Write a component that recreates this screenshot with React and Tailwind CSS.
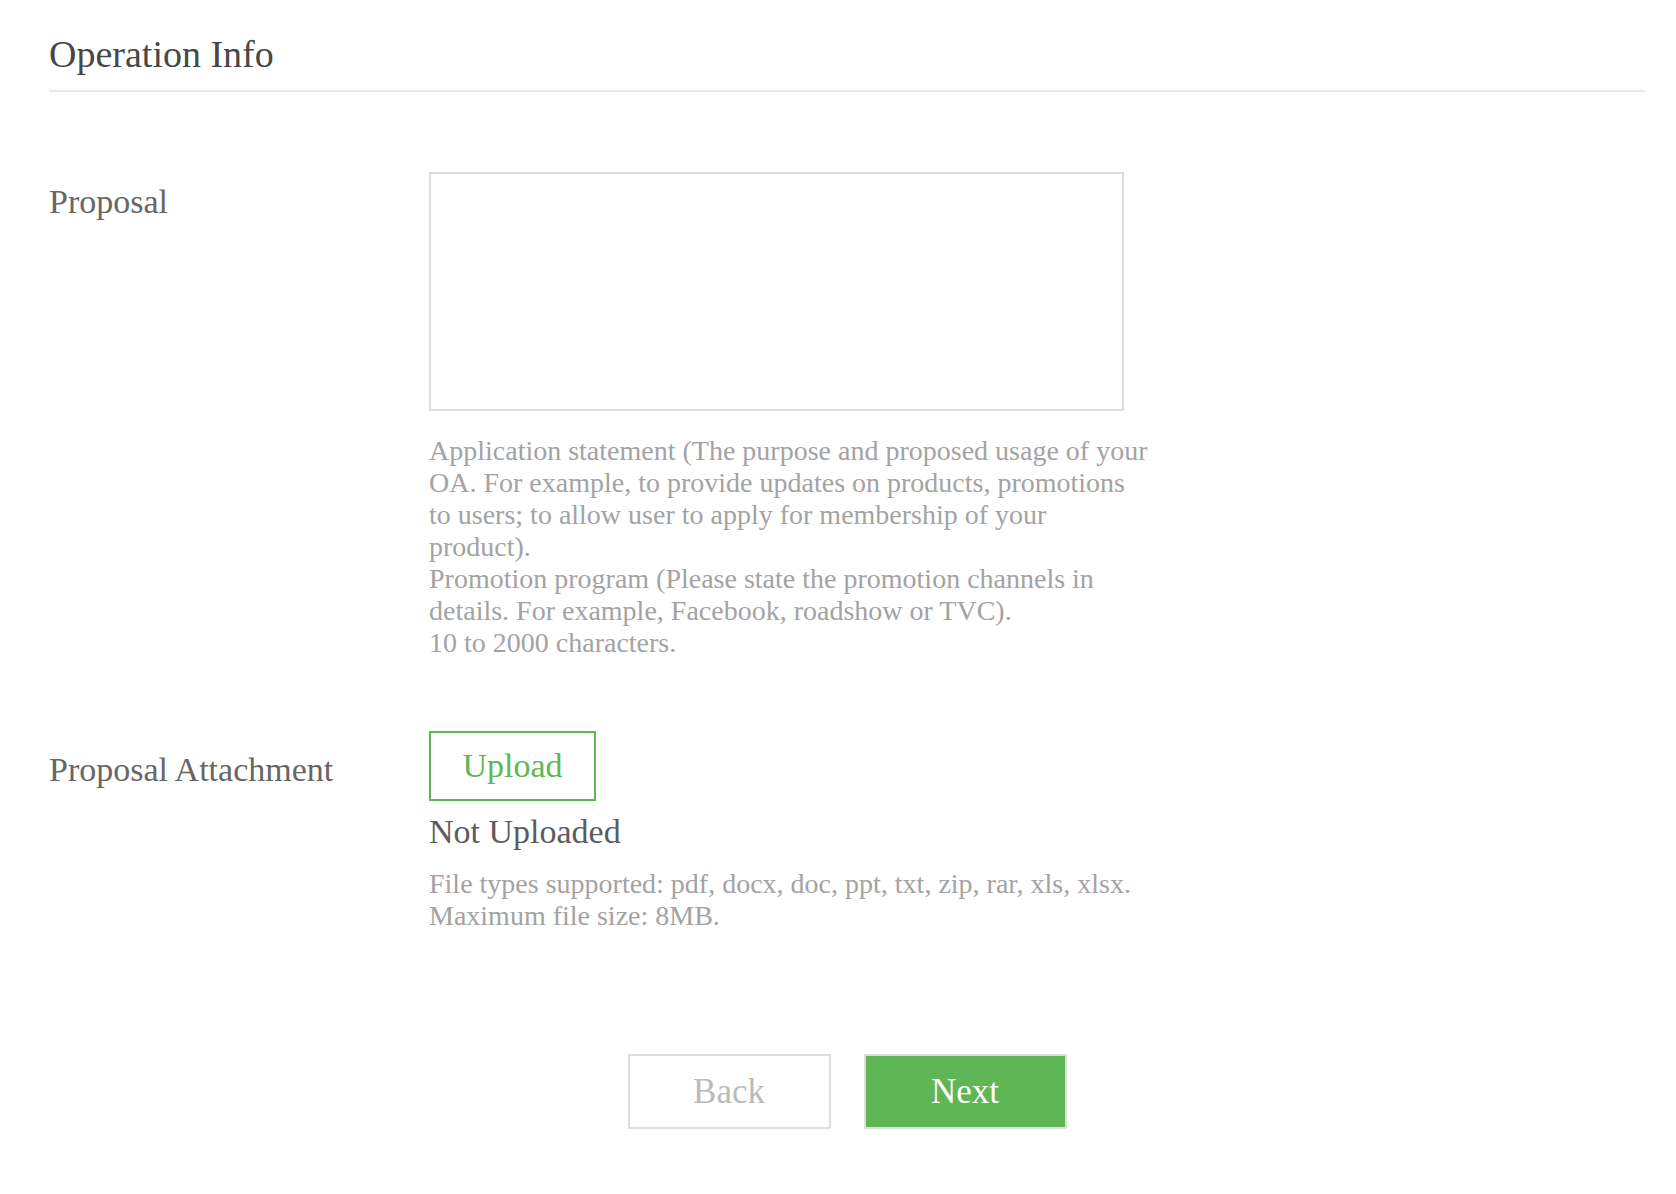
export default function App() {
  return (
    <div className="min-h-[1194px] bg-white pl-[49px] pr-[31px] font-['Liberation_Serif',serif]">
      <div className="border-b-2 border-[#e9e9e9] pt-[32px] pb-[14px]">
        <h2 className="text-[38px] leading-[44px] text-[#474747]">Operation Info</h2>
      </div>

      <div className="mt-[80px] flex">
        <div className="w-[380px] shrink-0 pt-[10px] text-[34px] leading-[40px] text-[#666]">
          Proposal
        </div>
        <div className="flex flex-col">
          <textarea className="block h-[239px] w-[695px] resize-none border-2 border-[#dedede] bg-white outline-none" />
          <p className="mt-[24px] w-[722px] text-[28px] leading-[32px] text-[#a3a3a3]">
            Application statement (The purpose and proposed usage of your OA. For example, to provide updates on products, promotions to users; to allow user to apply for membership of your product).
            <br />
            Promotion program (Please state the promotion channels in details. For example, Facebook, roadshow or TVC).
            <br />
            10 to 2000 characters.
          </p>
        </div>
      </div>

      <div className="mt-[72px] flex">
        <div className="w-[380px] shrink-0 pt-[19px] text-[34px] leading-[40px] text-[#666]">
          Proposal Attachment
        </div>
        <div className="flex flex-col items-start">
          <button className="h-[70px] w-[167px] border-2 border-[#5fb654] bg-white text-[34px] leading-[40px] text-[#5fb654]">
            Upload
          </button>
          <div className="mt-[11px] text-[34px] leading-[40px] text-[#5c5c5c]">Not Uploaded</div>
          <p className="mt-[16px] text-[28px] leading-[32px] text-[#a3a3a3]">
            File types supported: pdf, docx, doc, ppt, txt, zip, rar, xls, xlsx.
            <br />
            Maximum file size: 8MB.
          </p>
        </div>
      </div>

      <div className="mt-[122px] flex justify-center gap-[33px]">
        <button className="h-[75px] w-[203px] border-2 border-[#dedede] bg-white text-[35px] leading-[40px] text-[#bbb]">
          Back
        </button>
        <button className="h-[75px] w-[203px] border-2 border-[#dedede] bg-[#5fb654] text-[35px] leading-[40px] text-white">
          Next
        </button>
      </div>
    </div>
  );
}
